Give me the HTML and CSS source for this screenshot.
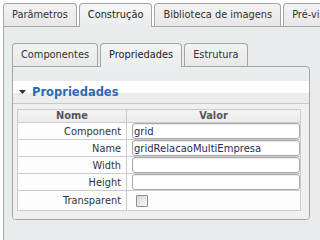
FILE: index.html
```html
<!DOCTYPE html>
<html lang="pt">
<head>
<meta charset="utf-8">
<title>Propriedades</title>
<link rel="stylesheet" href="styles.css">
</head>
<body>
<div class="app">
  <div class="tabs">
    <div class="tab">Parâmetros</div>
    <div class="tab active">Construção</div>
    <div class="tab">Biblioteca de imagens</div>
    <div class="tab">Pré-visualização</div>
  </div>
  <div class="panel">
    <div class="tabs">
      <div class="tab">Componentes</div>
      <div class="tab active sub">Propriedades</div>
      <div class="tab">Estrutura</div>
    </div>
    <div class="subpanel">
      <div class="sec-head">
        <svg class="tri" width="7" height="4" viewBox="0 0 7 4"><path d="M0 0H7L3.5 4Z" fill="#333"/></svg>
        <span class="sec-title">Propriedades</span>
      </div>
      <div class="sec-body">
        <table class="props">
          <colgroup><col class="c1"><col></colgroup>
          <thead>
            <tr><th>Nome</th><th>Valor</th></tr>
          </thead>
          <tbody>
            <tr><td class="lbl">Component</td><td class="val"><input class="field" type="text" value="grid"></td></tr>
            <tr><td class="lbl">Name</td><td class="val"><input class="field" type="text" value="gridRelacaoMultiEmpresa"></td></tr>
            <tr><td class="lbl">Width</td><td class="val"><input class="field" type="text" value=""></td></tr>
            <tr><td class="lbl">Height</td><td class="val"><input class="field" type="text" value=""></td></tr>
            <tr class="last"><td class="lbl">Transparent</td><td class="val"><input class="check" type="checkbox"></td></tr>
          </tbody>
        </table>
      </div>
    </div>
  </div>
</div>
</body>
</html>
```

FILE: styles.css
```css
html, body {
  margin: 0;
  padding: 0;
  overflow: hidden;
  background: #ffffff;
}

body {
  font-family: "DejaVu Sans", Verdana, sans-serif;
  font-size: 9.8px;
  color: #333333;
}

.app {
  padding: 3px 0 0 3px;
  width: 330px;
}

.tabs {
  display: flex;
  gap: 2px;
  white-space: nowrap;
  position: relative;
  z-index: 1;
}

.tab {
  height: 22px;
  line-height: 22px;
  padding: 0 8px;
  border: 1px solid #a6a6a6;
  border-bottom: none;
  border-radius: 4px 4px 0 0;
  background: linear-gradient(#f3f3f3, #e8e8e8);
  color: #333333;
}

.tab.active {
  background: linear-gradient(#f6f7f7, #e9ecec);
  height: 23px;
  margin-bottom: -1px;
  color: #222222;
}

.tab.active.sub {
  background: linear-gradient(#f4f5f5, #eaeded);
}

.panel {
  border: 1px solid #a6a6a6;
  border-radius: 0 4px 4px 4px;
  background: #e9ecec;
  padding: 16px 8px 8px 8px;
  height: 230px;
}

.subpanel {
  width: 298px;
  box-sizing: border-box;
  border: 1px solid #a6a6a6;
  border-radius: 0 4px 4px 4px;
  background: #eaeded;
  padding-top: 14px;
  overflow: hidden;
}

.sec-head {
  height: 22px;
  display: flex;
  align-items: center;
  gap: 6px;
  padding-left: 6px;
  background: linear-gradient(#ffffff 54%, #ececec 54%);
  border-bottom: 1px solid #c9c9c9;
}

.tri {
  display: block;
}

.sec-title {
  font-size: 11.5px;
  font-weight: bold;
  color: #2b6bb2;
}

.sec-body {
  background: #f0f0f0;
  padding: 5px 8px 8px 4px;
}

.props {
  width: 100%;
  border-collapse: collapse;
  border: 1px solid #cccccc;
  background: #fdfdfd;
}

.props .c1 {
  width: 109px;
}

.props th {
  height: 12px;
  padding: 0;
  line-height: 12px;
  font-weight: bold;
  color: #555555;
  text-align: center;
  background: linear-gradient(#f4f4f4, #ebebeb);
  border: 1px solid #cccccc;
}

.props td {
  height: 16px;
  padding: 0;
  border: 1px solid #cccccc;
  border-left: none;
  border-right: none;
}

.props td.lbl {
  text-align: right;
  padding-right: 5px;
  border-right: 1px solid #cccccc;
}

.props td.val {
  padding-left: 5px;
}

.props tr.last td {
  height: 19px;
}

.field {
  display: block;
  box-sizing: border-box;
  width: 100%;
  height: 16px;
  margin: 0;
  padding: 0 1px;
  border: 1px solid #a9a9a9;
  border-radius: 3px;
  background: #ffffff;
  box-shadow: inset 0 1px 1px rgba(0, 0, 0, 0.08);
  font-family: "DejaVu Sans", Verdana, sans-serif;
  font-size: 10px;
  color: #1e2d5c;
  outline: none;
}

.check {
  appearance: none;
  -webkit-appearance: none;
  display: block;
  width: 12px;
  height: 12px;
  margin: 0 0 0 4px;
  border: 1px solid #8f8f8f;
  border-radius: 1px;
  background: linear-gradient(135deg, #d8d8d8, #f6f6f6);
  box-sizing: border-box;
}
```
